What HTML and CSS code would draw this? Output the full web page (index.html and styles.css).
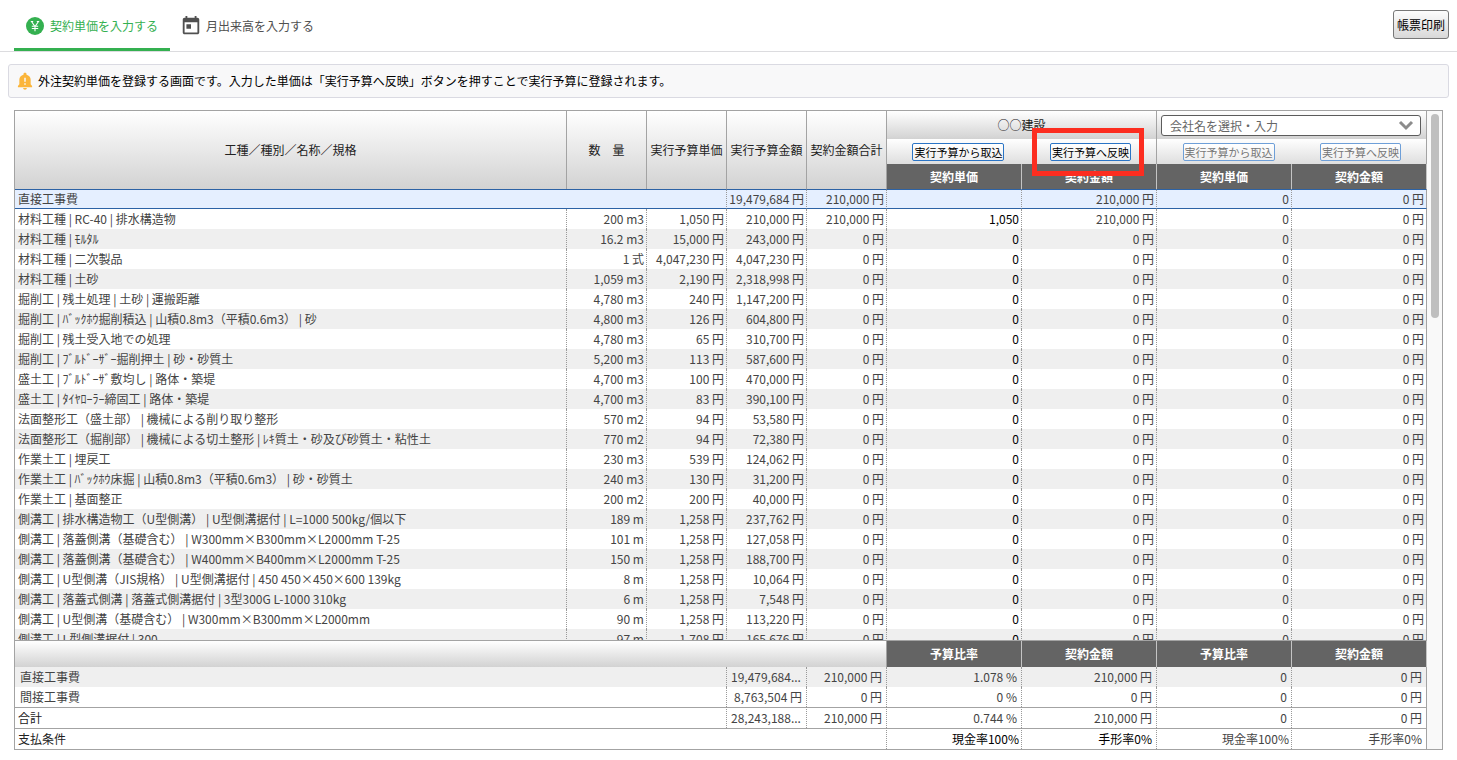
FILE: index.html
```html
<!DOCTYPE html>
<html lang="ja">
<head>
<meta charset="utf-8">
<title>外注契約単価</title>
<link rel="stylesheet" href="styles.css">
</head>
<body>
<header class="topbar">
  <nav class="tabs">
    <a class="tab tab-active" href="#unit-price">
      <svg class="tab-icon" viewBox="0 0 22 22" aria-hidden="true"><circle cx="11" cy="11" r="9" fill="#34b050"/><path d="M7.500 6.500l3.500 5 3.500-5M11 11v5.200M7.800 11.300h6.400M7.800 13.500h6.400M6.800 6.500h2.400M12.800 6.500h2.400" fill="none" stroke="#fff" stroke-width="1.100"/></svg>
      契約単価を入力する</a>
    <a class="tab" href="#monthly">
      <svg class="tab-icon" viewBox="0 0 24 24" aria-hidden="true"><path fill="#505050" d="M19 3h-1V1h-2v2H8V1H6v2H5c-1.110 0-1.990.9-1.990 2L3 19c0 1.100.89 2 2 2h14c1.100 0 2-.9 2-2V5c0-1.100-.9-2-2-2zm0 16H5V8h14v11zM7 10h5v5H7z"/></svg>
      月出来高を入力する</a>
  </nav>
  <button class="print-button" type="button">帳票印刷</button>
</header>
<main class="main">
  <p class="notice">
    <svg class="bell" viewBox="0 0 24 24" aria-hidden="true"><path fill="#fbb53a" fill-rule="evenodd" d="M18.800 16v-5.500c0-3-2-5.300-5-6V3.500C13.800 2.600 13 2 12 2s-1.800.6-1.800 1.500v1c-3 .7-5 3-5 6V16L3.500 18v1.500h17V18l-1.700-2zM12.900 16.500h-1.800v-1.800h1.800v1.800zm0-3.500h-1.800V8h1.800v5zm-.9 9.500c1.300 0 2.200-.8 2.200-2H9.800c0 1.200.9 2 2.200 2z"/></svg>
    外注契約単価を登録する画面です。入力した単価は「実行予算へ反映」ボタンを押すことで実行予算に登録されます。</p>
  <section class="panel">
    <div class="sheet">
      <table class="grid head">
        <colgroup><col><col class="c-num" span="4"><col class="c-vendor" span="4"></colgroup>
        <thead>
          <tr class="vendor-row">
            <th rowspan="3">工種／種別／名称／規格</th><th rowspan="3">数　量</th><th rowspan="3">実行予算単価</th><th rowspan="3">実行予算金額</th><th rowspan="3">契約金額合計</th>
            <th colspan="2">○○建設</th>
            <th colspan="2"><div class="combo"><select class="company" aria-label="会社名"><option>会社名を選択・入力</option></select><svg class="chevron" viewBox="0 0 16 12" aria-hidden="true"><path d="M2 2l6 6 6-6" fill="none" stroke="#8c8c8c" stroke-width="3"/></svg></div></th>
          </tr>
          <tr class="action-row">
            <td class="start"><button class="action" type="button">実行予算から取込</button></td>
            <td class="end"><span class="marked"><button class="action" type="button">実行予算へ反映</button><span class="marker"></span></span></td>
            <td class="start"><button class="action" type="button" disabled>実行予算から取込</button></td>
            <td class="end"><button class="action" type="button" disabled>実行予算へ反映</button></td>
          </tr>
          <tr class="dark-row"><th>契約単価</th><th>契約金額</th><th>契約単価</th><th>契約金額</th></tr>
        </thead>
      </table>
      <div class="body-view">
        <table class="grid body">
          <colgroup><col><col class="c-num" span="4"><col class="c-vendor" span="4"></colgroup>
          <tbody>
            <tr class="selected"><td colspan="3">直接工事費</td><td>19,479,684 円</td><td>210,000 円</td><td></td><td>210,000 円</td><td>0</td><td>0 円</td></tr>
            <tr><td>材料工種 | RC-40 | 排水構造物</td><td>200 m3</td><td>1,050 円</td><td>210,000 円</td><td>210,000 円</td><td class="edit">1,050</td><td>210,000 円</td><td>0</td><td>0 円</td></tr>
            <tr><td>材料工種 | ﾓﾙﾀﾙ</td><td>16.2 m3</td><td>15,000 円</td><td>243,000 円</td><td>0 円</td><td class="edit">0</td><td>0 円</td><td>0</td><td>0 円</td></tr>
            <tr><td>材料工種 | 二次製品</td><td>1 式</td><td>4,047,230 円</td><td>4,047,230 円</td><td>0 円</td><td class="edit">0</td><td>0 円</td><td>0</td><td>0 円</td></tr>
            <tr><td>材料工種 | 土砂</td><td>1,059 m3</td><td>2,190 円</td><td>2,318,998 円</td><td>0 円</td><td class="edit">0</td><td>0 円</td><td>0</td><td>0 円</td></tr>
            <tr><td>掘削工 | 残土処理 | 土砂 | 運搬距離</td><td>4,780 m3</td><td>240 円</td><td>1,147,200 円</td><td>0 円</td><td class="edit">0</td><td>0 円</td><td>0</td><td>0 円</td></tr>
            <tr><td>掘削工 | ﾊﾞｯｸﾎｳ掘削積込 | 山積0.8m3（平積0.6m3） | 砂</td><td>4,800 m3</td><td>126 円</td><td>604,800 円</td><td>0 円</td><td class="edit">0</td><td>0 円</td><td>0</td><td>0 円</td></tr>
            <tr><td>掘削工 | 残土受入地での処理</td><td>4,780 m3</td><td>65 円</td><td>310,700 円</td><td>0 円</td><td class="edit">0</td><td>0 円</td><td>0</td><td>0 円</td></tr>
            <tr><td>掘削工 | ﾌﾞﾙﾄﾞｰｻﾞｰ掘削押土 | 砂・砂質土</td><td>5,200 m3</td><td>113 円</td><td>587,600 円</td><td>0 円</td><td class="edit">0</td><td>0 円</td><td>0</td><td>0 円</td></tr>
            <tr><td>盛土工 | ﾌﾞﾙﾄﾞｰｻﾞ敷均し | 路体・築堤</td><td>4,700 m3</td><td>100 円</td><td>470,000 円</td><td>0 円</td><td class="edit">0</td><td>0 円</td><td>0</td><td>0 円</td></tr>
            <tr><td>盛土工 | ﾀｲﾔﾛｰﾗｰ締固工 | 路体・築堤</td><td>4,700 m3</td><td>83 円</td><td>390,100 円</td><td>0 円</td><td class="edit">0</td><td>0 円</td><td>0</td><td>0 円</td></tr>
            <tr><td>法面整形工（盛土部） | 機械による削り取り整形</td><td>570 m2</td><td>94 円</td><td>53,580 円</td><td>0 円</td><td class="edit">0</td><td>0 円</td><td>0</td><td>0 円</td></tr>
            <tr><td>法面整形工（掘削部） | 機械による切土整形 | ﾚｷ質土・砂及び砂質土・粘性土</td><td>770 m2</td><td>94 円</td><td>72,380 円</td><td>0 円</td><td class="edit">0</td><td>0 円</td><td>0</td><td>0 円</td></tr>
            <tr><td>作業土工 | 埋戻工</td><td>230 m3</td><td>539 円</td><td>124,062 円</td><td>0 円</td><td class="edit">0</td><td>0 円</td><td>0</td><td>0 円</td></tr>
            <tr><td>作業土工 | ﾊﾞｯｸﾎｳ床掘 | 山積0.8m3（平積0.6m3） | 砂・砂質土</td><td>240 m3</td><td>130 円</td><td>31,200 円</td><td>0 円</td><td class="edit">0</td><td>0 円</td><td>0</td><td>0 円</td></tr>
            <tr><td>作業土工 | 基面整正</td><td>200 m2</td><td>200 円</td><td>40,000 円</td><td>0 円</td><td class="edit">0</td><td>0 円</td><td>0</td><td>0 円</td></tr>
            <tr><td>側溝工 | 排水構造物工（U型側溝） | U型側溝据付 | L=1000 500kg/個以下</td><td>189 m</td><td>1,258 円</td><td>237,762 円</td><td>0 円</td><td class="edit">0</td><td>0 円</td><td>0</td><td>0 円</td></tr>
            <tr><td>側溝工 | 落蓋側溝（基礎含む） | W300mm×B300mm×L2000mm T-25</td><td>101 m</td><td>1,258 円</td><td>127,058 円</td><td>0 円</td><td class="edit">0</td><td>0 円</td><td>0</td><td>0 円</td></tr>
            <tr><td>側溝工 | 落蓋側溝（基礎含む） | W400mm×B400mm×L2000mm T-25</td><td>150 m</td><td>1,258 円</td><td>188,700 円</td><td>0 円</td><td class="edit">0</td><td>0 円</td><td>0</td><td>0 円</td></tr>
            <tr><td>側溝工 | U型側溝（JIS規格） | U型側溝据付 | 450 450×450×600 139kg</td><td>8 m</td><td>1,258 円</td><td>10,064 円</td><td>0 円</td><td class="edit">0</td><td>0 円</td><td>0</td><td>0 円</td></tr>
            <tr><td>側溝工 | 落蓋式側溝 | 落蓋式側溝据付 | 3型300G L-1000 310kg</td><td>6 m</td><td>1,258 円</td><td>7,548 円</td><td>0 円</td><td class="edit">0</td><td>0 円</td><td>0</td><td>0 円</td></tr>
            <tr><td>側溝工 | U型側溝（基礎含む） | W300mm×B300mm×L2000mm</td><td>90 m</td><td>1,258 円</td><td>113,220 円</td><td>0 円</td><td class="edit">0</td><td>0 円</td><td>0</td><td>0 円</td></tr>
            <tr><td>側溝工 | L型側溝据付 | 300</td><td>97 m</td><td>1,708 円</td><td>165,676 円</td><td>0 円</td><td class="edit">0</td><td>0 円</td><td>0</td><td>0 円</td></tr>
          </tbody>
        </table>
      </div>
      <table class="grid foot">
        <colgroup><col><col class="c-num" span="4"><col class="c-vendor" span="4"></colgroup>
        <thead>
          <tr class="dark-row foot-head"><td class="blank" colspan="5"></td><th>予算比率</th><th>契約金額</th><th>予算比率</th><th>契約金額</th></tr>
        </thead>
        <tbody>
          <tr class="shade"><td class="item" colspan="3">直接工事費</td><td class="short">19,479,684...</td><td>210,000 円</td><td>1.078 %</td><td>210,000 円</td><td>0</td><td>0 円</td></tr>
          <tr><td class="item" colspan="3">間接工事費</td><td>8,763,504 円</td><td>0 円</td><td>0 %</td><td>0 円</td><td>0</td><td>0 円</td></tr>
          <tr class="ruled"><td class="total" colspan="3">合計</td><td class="short">28,243,188...</td><td>210,000 円</td><td>0.744 %</td><td>210,000 円</td><td>0</td><td>0 円</td></tr>
          <tr class="ruled"><td class="total" colspan="5">支払条件</td><td class="edit cash">現金率100%</td><td class="edit">手形率0%</td><td class="cash">現金率100%</td><td>手形率0%</td></tr>
        </tbody>
      </table>
    </div>
    <div class="scrollbar"><div class="thumb"></div></div>
  </section>
</main>
</body>
</html>
```
FILE: styles.css
```css
* { box-sizing: border-box; }
body {
  margin: 0;
  height: 100vh;
  display: flex;
  flex-direction: column;
  background: #fff;
  color: #444;
  font: 12px/20px "Noto Sans CJK JP", sans-serif;
}
button, select { font: inherit; }

.topbar {
  display: flex;
  justify-content: space-between;
  height: 52px;
  flex: none;
  padding: 0 8px 0 14px;
  border-bottom: 1px solid #dcdcdf;
}
.tabs { display: flex; }
.tab {
  display: flex;
  align-items: center;
  gap: 4px;
  height: 51px;
  padding: 4px 12px 0 10px;
  border-bottom: 3px solid transparent;
  color: #505050;
  text-decoration: none;
}
.tab-active { border-color: #34b050; color: #34b050; }
.tab-icon { width: 22px; height: 22px; }
.print-button {
  height: 29px;
  margin-top: 10px;
  padding: 0 3px;
  border: 1px solid #777;
  border-radius: 3px;
  background: linear-gradient(#fdfdfd, #d8d8d8);
  color: #000;
}

.main {
  flex: 1;
  min-height: 0;
  display: flex;
  flex-direction: column;
  gap: 12px;
  padding: 12px 8px 10px;
}
.notice {
  display: flex;
  align-items: center;
  gap: 3px;
  height: 34px;
  flex: none;
  margin: 0;
  padding: 0 8px 0 6px;
  border: 1px solid #dadae2;
  border-radius: 3px;
  background: #f8f8f9;
  color: #000;
}
.bell { width: 20px; height: 20px; }

.panel {
  flex: 1;
  min-height: 0;
  display: flex;
  margin: 0 6px;
  border: 1px solid #a3a3a3;
}
.sheet { flex: 1; min-width: 0; display: flex; flex-direction: column; }
.scrollbar { width: 15px; padding: 3px 3px 3px 4px; background: #f9f9f9; }
.thumb { height: 204px; border-radius: 4px; background: #bfbfbf; }

.grid { width: 100%; table-layout: fixed; border-collapse: separate; border-spacing: 0; }
.c-num { width: 80px; }
.c-vendor { width: 135px; }
.grid th, .grid td { padding: 0; }

.head { flex: none; position: relative; z-index: 1; }
.head th {
  border-right: 1px solid #a3a3a3;
  background: linear-gradient(#fff, #d2d2d2);
  color: #222;
  font-weight: 400;
}
.vendor-row { height: 28px; }
.action-row { height: 25px; }
.action-row td {
  background: linear-gradient(#fff, #dedede);
  text-align: center;
  line-height: 18px;
}
.grid .action-row .start { padding-left: 8px; }
.grid .action-row .end { padding-left: 3px; border-right: 1px solid #a3a3a3; }
.grid .dark-row th {
  height: 25px;
  border-right: 1px solid #c4c4c4;
  background: #646464;
  color: #fff;
  font-weight: 700;
}
.combo { position: relative; margin: 0 5px 0 4px; }
.company {
  display: block;
  width: 100%;
  height: 21px;
  padding: 0 24px 0 8px;
  appearance: none;
  border: 1px solid #5c5c5c;
  border-radius: 3px;
  background: #fff;
  color: #666;
}
.chevron { position: absolute; top: 5px; right: 7px; width: 16px; height: 12px; }
.action {
  display: inline-block;
  height: 18px;
  padding: 0 1px;
  border: 1px solid #2a74c5;
  border-radius: 2px;
  background: linear-gradient(#fff, #efefef);
  color: #000;
  font-size: 11px;
  line-height: 16px;
  vertical-align: top;
}
.action:disabled { border-color: #6e9fd8; color: #777; }
.marked { position: relative; display: inline-block; height: 18px; vertical-align: top; }
.marker { position: absolute; inset: -15px -13px -15px -18px; border: 5px solid #fc2d20; pointer-events: none; }

.body-view { flex: 1; min-height: 0; overflow: hidden; }
.body td, .foot td {
  height: 20px;
  border-right: 1px dotted #999;
  text-align: right;
  white-space: nowrap;
  overflow: hidden;
}
.grid.body td { padding: 0 2px; }
.grid.body td:first-child { padding-left: 3px; }
.body td:first-child, .foot td:first-child { text-align: left; }
.body tr:nth-child(odd) { background: #efefef; }
.body td:last-child, .foot td:last-child { border-right: 1px solid #a3a3a3; }
.body tr.selected { background: #e5efff; }
.selected td { border-top: 1px solid #2c62a5; border-bottom: 1px solid #2c62a5; line-height: 18px; }
.grid .edit { color: #000; }

.foot { flex: none; border-top: 1px solid #a3a3a3; }
.grid.foot td { padding: 0 4px; }
.grid.foot .item { padding-left: 5px; }
.grid.foot .total { padding-left: 3px; color: #222; }
.grid.foot .cash { padding-right: 2px; }
.grid.foot .short { text-align: left; }
.grid .foot-head th { height: 26px; }
.foot .blank { border-right: 1px solid #a3a3a3; background: linear-gradient(#fff, #d2d2d2); }
.shade { background: #efefef; }
.ruled td { height: 21px; border-top: 1px solid #a3a3a3; }
```
